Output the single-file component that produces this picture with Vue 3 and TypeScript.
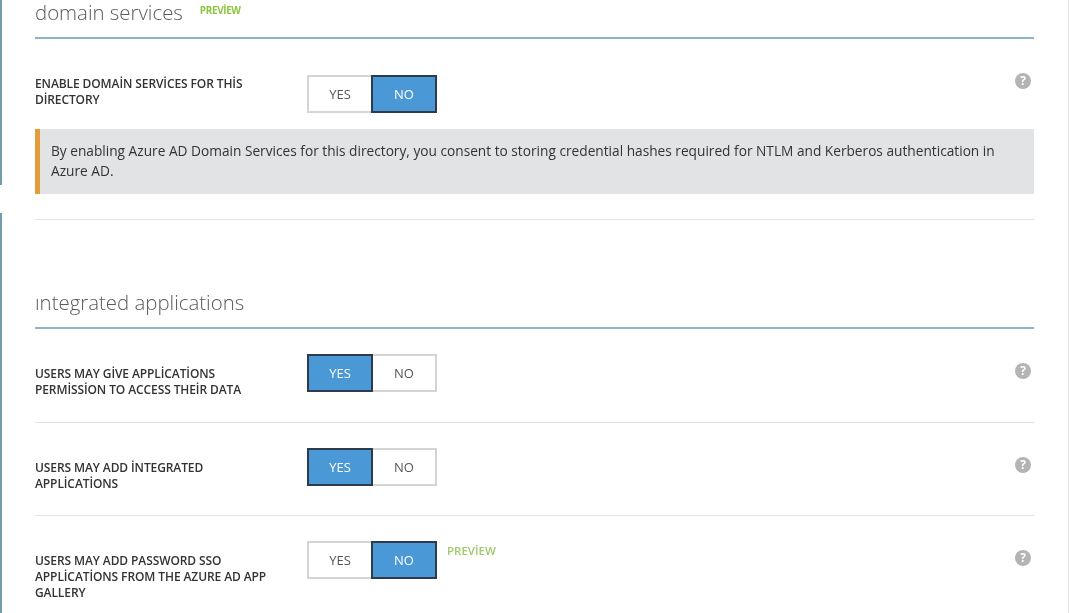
<script setup lang="ts">
interface Row {
  lines: string[]
  value: 'YES' | 'NO'
  preview?: boolean
}
const domainRow: Row = { lines: ['ENABLE DOMAİN SERVİCES FOR THİS', 'DİRECTORY'], value: 'NO' }
const rows: Row[] = [
  { lines: ['USERS MAY GİVE APPLİCATİONS', 'PERMİSSİON TO ACCESS THEİR DATA'], value: 'YES' },
  { lines: ['USERS MAY ADD İNTEGRATED', 'APPLİCATİONS'], value: 'YES' },
  { lines: ['USERS MAY ADD PASSWORD SSO', 'APPLİCATİONS FROM THE AZURE AD APP', 'GALLERY'], value: 'NO', preview: true },
]
const options = ['YES', 'NO'] as const
</script>

<template>
  <div class="page">
    <div class="rail">
      <span class="rail-top"></span>
      <span class="rail-bottom"></span>
    </div>
    <main class="content">
      <section>
        <header class="heading first">
          <h2>domain services</h2>
          <span class="tag-small">PREVİEW</span>
        </header>
        <div class="row first-row">
          <div class="label"><div v-for="l in domainRow.lines" :key="l">{{ l }}</div></div>
          <div class="toggle">
            <span v-for="o in options" :key="o" class="opt" :class="{ on: domainRow.value === o }">{{ o }}</span>
          </div>
          <span class="help">?</span>
        </div>
        <div class="alert">
          By enabling Azure AD Domain Services for this directory, you consent to storing credential hashes required for NTLM and Kerberos authentication in Azure AD.
        </div>
        <hr class="divider" />
      </section>
      <section>
        <header class="heading second">
          <h2>ıntegrated applications</h2>
        </header>
        <div v-for="(r, i) in rows" :key="i" class="row" :class="{ ruled: i < rows.length - 1 }">
          <div class="label"><div v-for="l in r.lines" :key="l">{{ l }}</div></div>
          <div class="toggle">
            <span v-for="o in options" :key="o" class="opt" :class="{ on: r.value === o }">{{ o }}</span>
          </div>
          <span v-if="r.preview" class="tag">PREVİEW</span>
          <span class="help">?</span>
        </div>
      </section>
    </main>
    <div class="edge"></div>
  </div>
</template>

<style>
html, body { margin: 0; background: #fff; overflow: hidden; }
</style>

<style scoped>
.page {
  display: flex;
  width: 1069px;
  height: 613px;
  overflow: hidden;
  background: #fff;
  font-family: "Open Sans", "Noto Sans", sans-serif;
  color: #3a3a3a;
  filter: blur(0.35px);
}
.rail { flex: 0 0 2px; display: flex; flex-direction: column; }
.rail-top { height: 185px; background: #6f9fa8; }
.rail-bottom { margin-top: 28px; flex: 1; background: #6f9fa8; }
.content { flex: 0 0 999px; margin-left: 33px; }
.edge { flex: 0 0 1px; margin-left: 34px; background: #e4e4e4; }
.heading {
  display: flex;
  align-items: flex-start;
  border-bottom: 2px solid #8fb3cc;
  box-sizing: border-box;
}
.heading.first { height: 39px; }
.heading.second { height: 109px; padding-top: 70px; }
h2 {
  margin: 0;
  font-size: 20.4px;
  line-height: 25px;
  font-weight: 300;
  color: #5a5a5a;
}
.tag-small {
  margin: 4px 0 0 17px;
  font-size: 10px;
  line-height: 13px;
  font-weight: 700;
  letter-spacing: -0.4px;
  color: #8cc63f;
}
.tag {
  margin: 2px 0 0 10px;
  font-size: 11.5px;
  line-height: 16px;
  font-weight: 600;
  color: #a0c96a;
}
.row {
  position: relative;
  display: flex;
  align-items: flex-start;
  box-sizing: border-box;
  padding-top: 25px;
  height: 93.5px;
}
.row.ruled { border-bottom: 1px solid #e3e3e3; }
.row.first-row { padding-top: 36px; height: 90px; }
.label {
  flex: 0 0 272px;
  margin-top: 12px;
  font-size: 12px;
  line-height: 16px;
  font-weight: 600;
  color: #333;
  white-space: nowrap;
  letter-spacing: -0.1px;
}
.first-row .label { margin-top: 1px; }
.toggle {
  display: flex;
  width: 130px;
  height: 38px;
  box-sizing: border-box;
  flex: none;
}
.opt {
  flex: 1;
  display: flex;
  align-items: center;
  justify-content: center;
  box-sizing: border-box;
  border: 2px solid #d4d4d4;
  font-size: 13px;
  color: #555;
}
.opt:first-child { border-right: 0; }
.opt:last-child { border-left: 0; }
.opt.on {
  background: #4a98d6;
  color: #fff;
  border: 2px solid #2d3c4c;
}
.help {
  position: absolute;
  right: 3px;
  top: 34px;
  width: 16px;
  height: 16px;
  border-radius: 50%;
  background: #b4b4b4;
  color: #fff;
  font-size: 12px;
  font-weight: 700;
  line-height: 16px;
  text-align: center;
}
.alert {
  box-sizing: border-box;
  height: 65px;
  padding: 12px 30px 0 11px;
  background: #e2e3e5;
  border-left: 5px solid #e59c3a;
  font-size: 13.7px;
  line-height: 19.5px;
  color: #333;
}
.divider {
  margin: 25px 0 0;
  border: 0;
  border-top: 1px solid #e3e3e3;
}
</style>
